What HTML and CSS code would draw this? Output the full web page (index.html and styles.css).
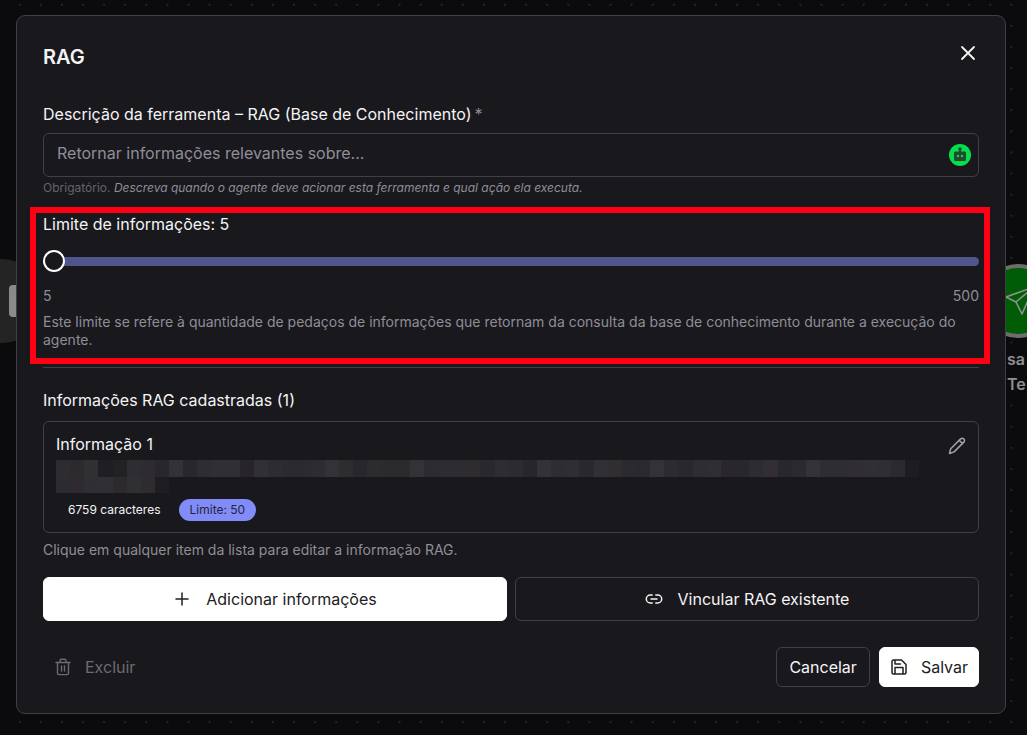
FILE: index.html
```html
<!DOCTYPE html>
<html lang="pt-BR">
<head>
  <meta charset="UTF-8">
  <title>RAG</title>
  <meta name="viewport" content="width=device-width, initial-scale=1.0">
  <link rel="stylesheet" href="styles.css">
</head>
<body>
  <!-- flow canvas behind the dialog -->
  <div class="canvas" aria-hidden="true">
    <svg class="dots" width="100%" height="100%">
      <defs>
        <pattern id="dot-grid" x="9.2" y="-5.8" width="21.1" height="21.1" patternUnits="userSpaceOnUse">
          <circle cx="10.5" cy="10.5" r="0.8" fill="#38383b" />
        </pattern>
      </defs>
      <rect width="100%" height="100%" fill="url(#dot-grid)" />
    </svg>
    <div class="node node-start"><span></span></div>
    <div class="node node-send">
      <svg width="30" height="30" viewBox="0 0 30 30" fill="none" stroke="#8d928d" stroke-width="1.6" stroke-linejoin="round">
        <path d="M1 11 29 1 17 28 11 16zM11 16 29 1" />
      </svg>
    </div>
    <div class="node-label">sa<br>Te</div>
  </div>

  <main class="modal" role="dialog" aria-labelledby="modal-title">
    <header class="modal-header">
      <h1 id="modal-title">RAG</h1>
      <button class="close" type="button" aria-label="Fechar">
        <svg width="22" height="22" viewBox="0 0 22 22" fill="none" stroke="currentColor" stroke-width="1.8" stroke-linecap="round">
          <path d="M5 5l12 12M17 5L5 17" />
        </svg>
      </button>
    </header>

    <div class="field">
      <label class="label" for="description">Descrição da ferramenta – RAG (Base de Conhecimento)<span class="required">*</span></label>
      <div class="input-box">
        <input id="description" type="text" placeholder="Retornar informações relevantes sobre...">
        <button class="bot" type="button" aria-label="Gerar com IA">
          <svg width="22" height="22" viewBox="0 0 22 22">
            <circle cx="11" cy="11" r="11" fill="#05df4b" />
            <path d="M10 5h2v3h-2z" fill="#26472f" />
            <circle cx="11" cy="5" r="1.8" fill="#26472f" />
            <rect x="5" y="7.500" width="12" height="9.500" rx="1.500" fill="#26472f" />
            <circle cx="9" cy="12" r="1.200" fill="#05df4b" />
            <circle cx="13" cy="12" r="1.200" fill="#05df4b" />
          </svg>
        </button>
      </div>
      <p class="hint"><span>Obrigatório.</span> <em>Descreva quando o agente deve acionar esta ferramenta e qual ação ela executa.</em></p>
    </div>

    <section class="highlight">
      <label class="label" for="limit">Limite de informações: 5</label>
      <input class="slider" id="limit" type="range" min="5" max="500" value="5">
      <div class="range-ends"><span>5</span><span>500</span></div>
      <p class="note">Este limite se refere à quantidade de pedaços de informações que retornam da consulta da base de conhecimento durante a execução do agente.</p>
    </section>

    <hr>

    <h2 class="label">Informações RAG cadastradas (1)</h2>
    <article class="card">
      <div class="card-head">
        <h3 class="label">Informação 1</h3>
        <button class="edit" type="button" aria-label="Editar">
          <svg width="18" height="18" viewBox="0 0 18 18" fill="none" stroke="currentColor" stroke-width="1.5" stroke-linejoin="round" stroke-linecap="round">
            <path d="M1.500 16.500 2.700 11.800 12.600 1.900a2.200 2.200 0 0 1 3.200 0 2.200 2.200 0 0 1 0 3.200L6.100 14.900zM11.200 3.300l3.300 3.300" />
          </svg>
        </button>
      </div>
      <svg class="redacted" id="redacted" width="863" height="33" shape-rendering="crispEdges" aria-hidden="true"></svg>
      <div class="tags">
        <span class="tag">6759 caracteres</span>
        <span class="tag tag-limit">Limite: 50</span>
      </div>
    </article>
    <p class="note list-note">Clique em qualquer item da lista para editar a informação RAG.</p>

    <div class="actions">
      <button class="btn btn-primary" type="button">
        <svg width="18" height="18" viewBox="0 0 18 18" fill="none" stroke="currentColor" stroke-width="1.5" stroke-linecap="round">
          <path d="M9 3v12M3 9h12" />
        </svg>
        Adicionar informações
      </button>
      <button class="btn" type="button">
        <svg width="18" height="18" viewBox="0 0 18 18" fill="none" stroke="currentColor" stroke-width="1.5" stroke-linecap="round">
          <path d="M7.200 13H5.300a4 4 0 0 1 0-8h1.900M10.800 5h1.900a4 4 0 0 1 0 8h-1.900M6 9h6" />
        </svg>
        Vincular RAG existente
      </button>
    </div>

    <footer class="modal-footer">
      <button class="btn btn-icon btn-ghost" type="button">
        <svg width="18" height="18" viewBox="0 0 18 18" fill="none" stroke="currentColor" stroke-width="1.4" stroke-linecap="round" stroke-linejoin="round">
          <path d="M2 4.500h14M3.500 4.500V15a1.600 1.600 0 0 0 1.600 1.600h7.800a1.600 1.600 0 0 0 1.600-1.600V4.500M6 4.500V2.800a1.600 1.600 0 0 1 1.600-1.600h2.800A1.600 1.600 0 0 1 12 2.800v1.700M7.500 8v5M10.500 8v5" />
        </svg>
        Excluir
      </button>
      <div class="footer-right">
        <button class="btn" type="button">Cancelar</button>
        <button class="btn btn-icon btn-primary" type="button">
          <svg width="18" height="18" viewBox="0 0 18 18" fill="none" stroke="currentColor" stroke-width="1.500" stroke-linejoin="round" stroke-linecap="round">
            <path d="M3.500 2h8L16 6.500v8A1.500 1.500 0 0 1 14.500 16h-11A1.500 1.500 0 0 1 2 14.500v-11A1.500 1.500 0 0 1 3.500 2zM5 16v-6.500h8V16M5 2v4h5.500" />
          </svg>
          Salvar
        </button>
      </div>
    </footer>
  </main>

  <script>
    const rows = [
      "2d2c30 2c2a2d 302f33 1f1e22 222125 2e2d31 2e2c30 28272b 333237 28272b 2e2d31 303034 303034 28252a 313035 2d2c30 2b2a2e 2b2a2e 2d2c30 333237 2d2d30 28272b 2e2b2f 2b2b2e 2b2b2e 333237 2c2b2f 2d2c30 2d2c30 2f2c30 29282c 2e2d31 2c2b2f 27262a 333237 2e2d31 2f2e32 29282c 313035 312d31 2b2a2e 2a292d 333237 2c2b2f 29282c 2e2d31 2f2e32 29272b 28272b 2d2c30 322e33 28272b 2b2a2e 343338 2e2d31 2e2d31 312d32 302f33 2f2e32 2b2a2e 1d1c20",
      "2c2b2f 2e2a30 2f2e33 302f33 2d2a2e 302f34 2f2b2f 1e1d21"
    ];
    const cell = 863 / 61;
    let html = "";
    rows.forEach((row, y) => {
      row.split(" ").forEach((color, x) => {
        html += `<rect x="${x * cell}" y="${y * 17}" width="${cell}" height="17" fill="#${color}"/>`;
      });
    });
    document.getElementById("redacted").innerHTML = html;
  </script>
</body>
</html>
```
FILE: styles.css
```css
* {
  box-sizing: border-box;
}
body {
  margin: 0;
  padding: 15px 21px 21px 16px;
  background-color: #0b0b0d;
  color: #f4f4f5;
  font-family: Inter, "Open Sans", sans-serif;
  font-size: 16px;
  line-height: 24px;
}
h1, h2, h3, p {
  margin: 0;
}
button, input {
  font: inherit;
  color: inherit;
}
button {
  padding: 0;
  border: none;
  background: none;
  cursor: pointer;
}
svg {
  display: block;
  flex: none;
}

/* canvas */
.canvas {
  position: absolute;
  inset: 0;
  overflow: hidden;
}
.dots {
  position: absolute;
}
.node {
  position: absolute;
  display: flex;
  align-items: center;
  border-radius: 50%;
}
.node-start {
  left: -40px;
  top: 259px;
  width: 84px;
  height: 84px;
  padding-left: 49px;
  background: #242424;
}
.node-start span {
  width: 32px;
  height: 32px;
  border-radius: 4px;
  background: #8a8a8a;
}
.node-send {
  right: -28px;
  top: 264px;
  width: 74px;
  height: 74px;
  padding-left: 20px;
  border: 4px solid #6d6d6d;
  background: #015c06;
}
.node-label {
  position: absolute;
  right: 0;
  top: 347px;
  width: 20px;
  color: #8f8f8f;
  background: #0b0b0d;
  font-weight: 600;
  line-height: 25px;
}

/* dialog */
.modal {
  position: relative;
  padding: 28px 26px 26px;
  border: 1px solid #3f3f46;
  border-radius: 9px;
  background: #19181d;
}
.modal-header {
  display: flex;
  justify-content: space-between;
  align-items: flex-start;
  height: 59px;
}
.modal-header h1 {
  font-size: 20px;
  font-weight: 600;
  line-height: 26px;
}
.close svg {
  margin-top: -2px;
}
.label {
  display: block;
  font-size: 16px;
  font-weight: 400;
  line-height: 22px;
}
.required {
  margin-left: 3px;
  color: #8f8e97;
}
.input-box {
  display: flex;
  align-items: center;
  height: 44px;
  margin-top: 8px;
  padding: 0 7px 0 13px;
  border: 1px solid #3f3f46;
  border-radius: 6px;
}
.input-box input {
  flex: 1;
  min-width: 0;
  padding: 0 0 4px;
  border: none;
  outline: none;
  background: none;
}
.input-box input::placeholder {
  color: #8f8e99;
  opacity: 1;
}
.hint {
  margin-top: 2px;
  color: #8f8e97;
  font-size: 12px;
  line-height: 18px;
}
.hint span {
  color: #65646b;
}
.note, .range-ends {
  color: #8f8e97;
  font-size: 14px;
  line-height: 18px;
}
.highlight {
  margin: 10px -11px 0 -13px;
  padding: 0 5px 9px 7px;
  border: 6px solid #ff0015;
}
.slider {
  display: block;
  width: 100%;
  height: 22px;
  margin: 15px 0 0;
  appearance: none;
  background: none;
}
.slider::-webkit-slider-runnable-track {
  height: 9px;
  border-radius: 5px;
  background: #50558c;
}
.slider::-webkit-slider-thumb {
  appearance: none;
  width: 22px;
  height: 22px;
  margin-top: -7px;
  border: 2px solid #fff;
  border-radius: 50%;
  background: #19181d;
}
.range-ends {
  display: flex;
  justify-content: space-between;
  margin: 15px 0 8px;
}
hr {
  margin: 3px 0 21px;
  border: none;
  border-top: 1px solid #3f3f46;
}

/* list item */
.card {
  margin-top: 10px;
  padding: 11px 12px;
  border: 1px solid #3f3f46;
  border-radius: 6px;
}
.card-head {
  display: flex;
  justify-content: space-between;
  align-items: flex-end;
}
.edit {
  color: #a1a1aa;
}
.redacted {
  max-width: 100%;
  margin-top: 5px;
}
.tags {
  display: flex;
  gap: 6px;
  margin-top: 6px;
}
.tag {
  padding: 0 12px;
  border-radius: 11px;
  font-size: 12px;
  line-height: 22px;
}
.tag-limit {
  padding: 0 11px;
  background: #818cf8;
  color: #25253a;
}
.list-note {
  margin-top: 8px;
}

/* buttons */
.actions {
  display: grid;
  grid-template-columns: 1fr 1fr;
  gap: 8px;
  margin-top: 18px;
}
.btn {
  display: flex;
  align-items: center;
  justify-content: center;
  gap: 15px;
  height: 40px;
  padding: 0 12px;
  border: 1px solid #3f3f46;
  border-radius: 6px;
}
.actions .btn {
  height: 44px;
}
.btn-primary {
  border-color: #fff;
  background: #fff;
  color: #202024;
}
.btn-icon {
  gap: 13px;
  padding: 0 10px;
}
.btn-ghost {
  border-color: transparent;
  color: #6c6b70;
}
.modal-footer {
  display: flex;
  justify-content: space-between;
  margin-top: 26px;
}
.footer-right {
  display: flex;
  gap: 9px;
}
```
